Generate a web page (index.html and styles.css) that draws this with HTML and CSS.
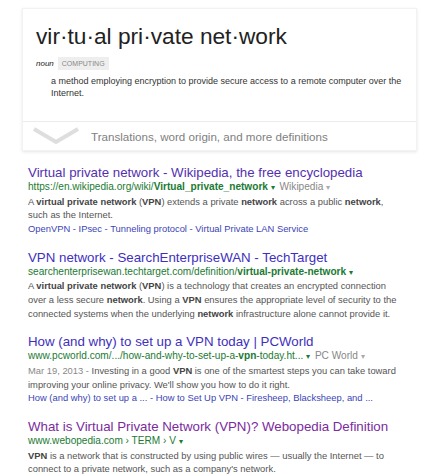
FILE: index.html
```html
<!DOCTYPE html>
<html>
<head>
<meta charset="utf-8">
<link rel="stylesheet" href="styles.css">
</head>
<body>
<div class="page">
  <div class="card">
    <div class="card-body">
      <div class="word">vir·tu·al pri·vate net·work</div>
      <div class="pos"><span class="noun">noun</span><span class="tag">COMPUTING</span></div>
      <div class="def">a method employing encryption to provide secure access to a remote computer over the<br>Internet.</div>
    </div>
    <div class="card-foot">
      <svg class="chev" width="48" height="18" viewBox="0 0 48 18"><polyline points="2,2 24,15 46,2" fill="none" stroke="#dedede" stroke-width="4"/></svg>
      <span class="more">Translations, word origin, and more definitions</span>
    </div>
  </div>

  <div class="result first">
    <div class="title t1">Virtual private network - Wikipedia, the free encyclopedia</div>
    <div class="url">https://en.wikipedia.org/wiki/<b>Virtual_private_network</b> <span class="arr">▾</span> <span class="src">Wikipedia <span class="arr g">▾</span></span></div>
    <div class="snip">A <b>virtual private network</b> (<b>VPN</b>) extends a private <b>network</b> across a public <b>network</b>,<br>such as the Internet.</div>
    <div class="links">OpenVPN - IPsec - Tunneling protocol - Virtual Private LAN Service</div>
  </div>

  <div class="result">
    <div class="title t2">VPN network - SearchEnterpriseWAN - TechTarget</div>
    <div class="url">searchenterprisewan.techtarget.com/definition/<b>virtual-private-network</b> <span class="arr">▾</span></div>
    <div class="snip">A <b>virtual private network</b> (<b>VPN</b>) is a technology that creates an encrypted connection<br>over a less secure <b>network</b>. Using a <b>VPN</b> ensures the appropriate level of security to the<br>connected systems when the underlying <b>network</b> infrastructure alone cannot provide it.</div>
  </div>

  <div class="result">
    <div class="title t3">How (and why) to set up a VPN today | PCWorld</div>
    <div class="url">www.pcworld.com/.../how-and-why-to-set-up-a-<b>vpn</b>-today.ht... <span class="arr">▾</span> <span class="src">PC World <span class="arr g">▾</span></span></div>
    <div class="snip"><span class="date">Mar 19, 2013 - </span>Investing in a good <b>VPN</b> is one of the smartest steps you can take toward<br>improving your online privacy. We'll show you how to do it right.</div>
    <div class="links">How (and why) to set up a ... - How to Set Up VPN - Firesheep, Blacksheep, and ...</div>
  </div>

  <div class="result">
    <div class="title t4">What is Virtual Private Network (VPN)? Webopedia Definition</div>
    <div class="url">www.webopedia.com › TERM › V <span class="arr">▾</span></div>
    <div class="snip"><b>VPN</b> is a network that is constructed by using public wires — usually the Internet — to<br>connect to a private network, such as a company's network.</div>
  </div>
</div>
</body>
</html>
```

FILE: styles.css
```css
html, body {
  margin: 0;
  padding: 0;
  background: #fff;
}
body {
  font-family: "Liberation Sans", Arial, sans-serif;
  color: #222;
}
.page {
  padding: 8px 0 0 0;
}
.card {
  margin-left: 22px;
  width: 395px;
  background: #fff;
  border: 1px solid #f2f2f2;
  box-shadow: 0 1px 3px rgba(0, 0, 0, 0.10);
  box-sizing: border-box;
}
.card-body {
  padding: 13px 0 22px 13px;
}
.word {
  font-size: 22.7px;
  line-height: 28px;
  color: #222;
}
.pos {
  display: flex;
  align-items: center;
  margin-top: 7px;
  height: 13px;
}
.noun {
  font-style: italic;
  font-size: 8px;
  color: #222;
  margin-right: 4px;
}
.tag {
  background: #eee;
  color: #888;
  font-size: 7px;
  line-height: 13px;
  padding: 0 4px;
}
.def {
  margin-top: 5px;
  margin-left: 15px;
  font-size: 9px;
  line-height: 12px;
  color: #333;
}
.card-foot {
  border-top: 1px solid #ebebeb;
  height: 28px;
  display: flex;
  align-items: center;
  padding-left: 9px;
}
.chev {
  display: block;
  margin-right: 11px;
}
.more {
  font-size: 11.6px;
  color: #808080;
}
.result {
  margin-left: 28px;
  margin-top: 15px;
}
.result.first {
  margin-top: 15px;
}
.title {
  font-size: 13.3px;
  line-height: 14px;
  white-space: nowrap;
}
.t1 { color: #5430b0; }
.t2 { color: #3e30bd; }
.t3 { color: #3e30bd; }
.t4 { color: #7a2b9c; }
.url {
  font-size: 10.1px;
  line-height: 13.65px;
  color: #1b7a33;
  white-space: nowrap;
}
.url b {
  font-weight: bold;
}
.arr {
  font-size: 8px;
  color: #1b7a33;
}
.arr.g {
  color: #aaa;
}
.src {
  color: #888;
  margin-left: 2px;
}
.snip {
  font-size: 9.4px;
  line-height: 13.65px;
  color: #555;
  white-space: nowrap;
}
.snip b {
  color: #444;
}
.date {
  color: #888;
}
.links {
  font-size: 9.4px;
  line-height: 13.65px;
  color: #3b45b5;
  white-space: nowrap;
}
```
